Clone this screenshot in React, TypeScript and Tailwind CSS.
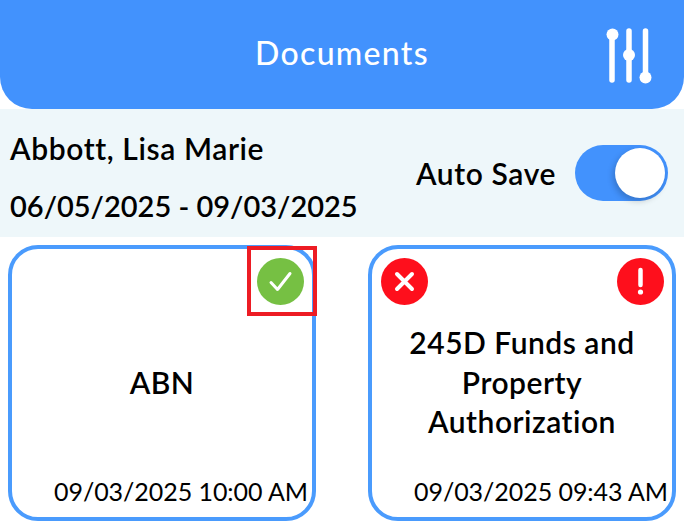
import React from 'react';

const FONT = "font-['Lato','Open_Sans',sans-serif]";

const Sliders = () => (
  <svg width="48" height="56" viewBox="0 0 48 56" fill="none" className="text-white">
    <g stroke="currentColor" strokeWidth="5.5" strokeLinecap="round">
      <path d="M7 8V52" />
      <path d="M24 3V52" />
      <path d="M40.5 3V48" />
    </g>
    <circle cx="7.5" cy="6.5" r="6" fill="currentColor" />
    <circle cx="24" cy="27" r="6" fill="currentColor" />
    <circle cx="40.5" cy="49.5" r="6" fill="currentColor" />
  </svg>
);

const CheckBadge = () => (
  <svg width="47" height="47" viewBox="0 0 47 47">
    <circle cx="23.5" cy="23.5" r="23.5" fill="#76c043" />
    <path d="M14 24.5L20.5 31.5L33 15.5" fill="none" stroke="#fff" strokeWidth="3" strokeLinecap="round" strokeLinejoin="round" />
  </svg>
);

const CrossBadge = () => (
  <svg width="47" height="47" viewBox="0 0 47 47">
    <circle cx="23.5" cy="23.5" r="23.5" fill="#fe0f1c" />
    <path d="M16 16L31 31M31 16L16 31" fill="none" stroke="#fff" strokeWidth="4" strokeLinecap="round" />
  </svg>
);

const AlertBadge = () => (
  <svg width="47" height="47" viewBox="0 0 47 47">
    <circle cx="23.5" cy="23.5" r="23.5" fill="#fe0f1c" />
    <path d="M23.5 12V27" fill="none" stroke="#fff" strokeWidth="4.5" strokeLinecap="round" />
    <circle cx="23.5" cy="34" r="2.6" fill="#fff" />
  </svg>
);

const Card = ({
  left,
  right,
  title,
  date,
}: {
  left?: React.ReactNode;
  right?: React.ReactNode;
  title: React.ReactNode;
  date: string;
}) => (
  <div className="h-[276px] rounded-[30px] border-4 border-[#4a9bfd] bg-white flex flex-col pt-[9px] pb-[11px] pl-[9px] pr-[4px]">
    <div className="flex justify-between h-[47px] pr-[4px]">
      <div>{left}</div>
      <div>{right}</div>
    </div>
    <div className="flex-1 flex items-center justify-center pr-[5px] pb-[16px] text-center text-[30px] tracking-[0.5px] leading-[39.5px] font-semibold text-black">
      {title}
    </div>
    <div className="text-right text-[25px] tracking-[-0.05px] leading-[30px] text-black">{date}</div>
  </div>
);

const App: React.FC = () => {
  return (
    <div className={`w-[688px] h-[532px] bg-white overflow-hidden relative ${FONT}`}>
      <div className="w-[684px]">
        {/* Header */}
        <div className="h-[109px] bg-[#4292fd] rounded-b-[32px] grid grid-cols-[1fr_auto_1fr] items-center">
          <div />
          <h1 className="text-[32px] font-medium text-white tracking-[1.3px] -mt-[3px]">Documents</h1>
          <div className="justify-self-end mr-[31px] mt-[2px]">
            <Sliders />
          </div>
        </div>

        {/* Patient row */}
        <div className="h-[128px] bg-[#eef7fa] flex items-center justify-between pl-[10px] pr-[16px]">
          <div className="font-semibold text-black leading-[58px] pt-[8px]">
            <div className="text-[30px] tracking-[0.6px]">Abbott, Lisa Marie</div>
            <div className="text-[29px]">06/05/2025 - 09/03/2025</div>
          </div>
          <div className="flex items-center gap-[19px]">
            <span className="text-[30px] font-semibold tracking-[0.6px] text-black">Auto Save</span>
            <div className="w-[93px] h-[56px] rounded-full bg-[#4292fd] flex items-center justify-end pr-[3px]">
              <div className="w-[50px] h-[50px] rounded-full bg-white shadow-[-2px_3px_6px_rgba(0,0,0,0.2)]" />
            </div>
          </div>
        </div>

        {/* Documents */}
        <div className="grid grid-cols-2 gap-[52px] pt-[8px] pl-[8px] pr-[8px]">
          <Card right={<CheckBadge />} title="ABN" date="09/03/2025 10:00 AM" />
          <Card
            left={<CrossBadge />}
            right={<AlertBadge />}
            title={
              <span>
                245D Funds and
                <br />
                Property
                <br />
                Authorization
              </span>
            }
            date="09/03/2025 09:43 AM"
          />
        </div>
      </div>

      {/* Red annotation box */}
      <div className="absolute left-[247px] top-[246px] w-[70px] h-[70px] border-4 border-[#ed1c24]" />
    </div>
  );
};

export default App;
